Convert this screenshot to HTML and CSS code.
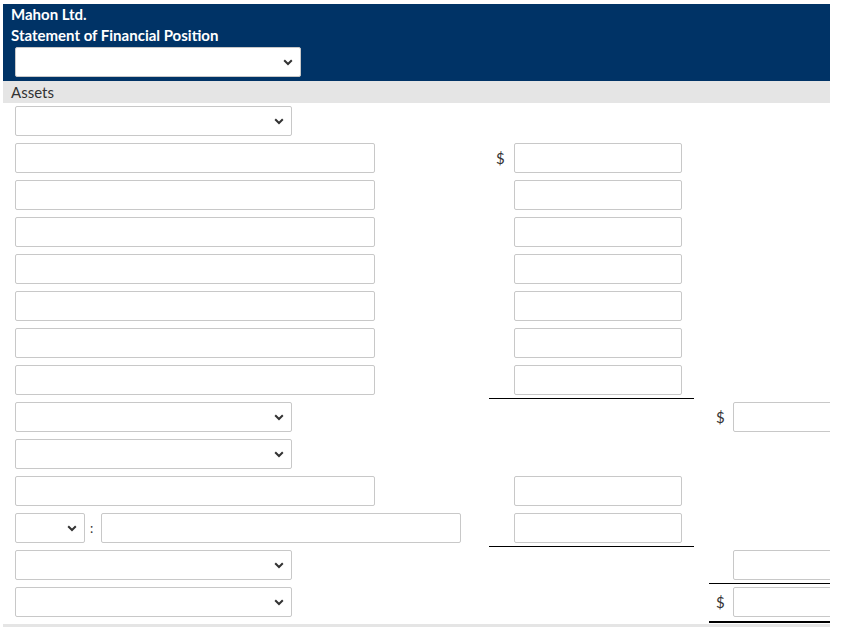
FILE: index.html
```html
<!DOCTYPE html>
<html>
<head>
<meta charset="utf-8">
<link rel="stylesheet" href="styles.css">
</head>
<body>
<div class="sheet">
  <div class="head">
    <div class="title">Mahon Ltd.</div>
    <div class="title">Statement of Financial Position</div>
    <div class="sel sel-head"><svg class="chev" width="10" height="7" viewBox="0 0 10 7"><path d="M1.2 1.3 L5 5 L8.8 1.3" fill="none" stroke="#333" stroke-width="2"/></svg></div>
  </div>
  <div class="section">Assets</div>
  <div class="rows">
    <div class="row">
      <div class="c1"><div class="sel sel-w"><svg class="chev" width="10" height="7" viewBox="0 0 10 7"><path d="M1.2 1.3 L5 5 L8.8 1.3" fill="none" stroke="#333" stroke-width="2"/></svg></div></div>
      <div class="c2"></div><div class="gap"></div><div class="c3"></div>
    </div>
    <div class="row">
      <div class="c1"><div class="inp inp-w"></div></div>
      <div class="c2"><span class="cur">$</span><div class="inp inp-n"></div></div><div class="gap"></div><div class="c3"></div>
    </div>
    <div class="row">
      <div class="c1"><div class="inp inp-w"></div></div>
      <div class="c2"><span class="cur"></span><div class="inp inp-n"></div></div><div class="gap"></div><div class="c3"></div>
    </div>
    <div class="row">
      <div class="c1"><div class="inp inp-w"></div></div>
      <div class="c2"><span class="cur"></span><div class="inp inp-n"></div></div><div class="gap"></div><div class="c3"></div>
    </div>
    <div class="row">
      <div class="c1"><div class="inp inp-w"></div></div>
      <div class="c2"><span class="cur"></span><div class="inp inp-n"></div></div><div class="gap"></div><div class="c3"></div>
    </div>
    <div class="row">
      <div class="c1"><div class="inp inp-w"></div></div>
      <div class="c2"><span class="cur"></span><div class="inp inp-n"></div></div><div class="gap"></div><div class="c3"></div>
    </div>
    <div class="row">
      <div class="c1"><div class="inp inp-w"></div></div>
      <div class="c2"><span class="cur"></span><div class="inp inp-n"></div></div><div class="gap"></div><div class="c3"></div>
    </div>
    <div class="row">
      <div class="c1"><div class="inp inp-w"></div></div>
      <div class="c2 rule"><span class="cur"></span><div class="inp inp-n"></div></div><div class="gap"></div><div class="c3"></div>
    </div>
    <div class="row">
      <div class="c1"><div class="sel sel-w"><svg class="chev" width="10" height="7" viewBox="0 0 10 7"><path d="M1.2 1.3 L5 5 L8.8 1.3" fill="none" stroke="#333" stroke-width="2"/></svg></div></div>
      <div class="c2"></div><div class="gap"></div>
      <div class="c3"><span class="cur cur3">$</span><div class="inp inp-n"></div></div>
    </div>
    <div class="row">
      <div class="c1"><div class="sel sel-w"><svg class="chev" width="10" height="7" viewBox="0 0 10 7"><path d="M1.2 1.3 L5 5 L8.8 1.3" fill="none" stroke="#333" stroke-width="2"/></svg></div></div>
      <div class="c2"></div><div class="gap"></div><div class="c3"></div>
    </div>
    <div class="row">
      <div class="c1"><div class="inp inp-w"></div></div>
      <div class="c2"><span class="cur"></span><div class="inp inp-n"></div></div><div class="gap"></div><div class="c3"></div>
    </div>
    <div class="row">
      <div class="c1">
        <div class="sel sel-s"><svg class="chev" width="10" height="7" viewBox="0 0 10 7"><path d="M1.2 1.3 L5 5 L8.8 1.3" fill="none" stroke="#333" stroke-width="2"/></svg></div>
        <span class="colon">:</span>
        <div class="inp inp-w"></div>
      </div>
      <div class="c2 rule"><span class="cur"></span><div class="inp inp-n"></div></div><div class="gap"></div><div class="c3"></div>
    </div>
    <div class="row">
      <div class="c1"><div class="sel sel-w"><svg class="chev" width="10" height="7" viewBox="0 0 10 7"><path d="M1.2 1.3 L5 5 L8.8 1.3" fill="none" stroke="#333" stroke-width="2"/></svg></div></div>
      <div class="c2"></div><div class="gap"></div>
      <div class="c3 rule"><span class="cur cur3"></span><div class="inp inp-n"></div></div>
    </div>
    <div class="row row-last">
      <div class="c1"><div class="sel sel-w"><svg class="chev" width="10" height="7" viewBox="0 0 10 7"><path d="M1.2 1.3 L5 5 L8.8 1.3" fill="none" stroke="#333" stroke-width="2"/></svg></div></div>
      <div class="c2"></div><div class="gap"></div>
      <div class="c3 rule2"><span class="cur cur3">$</span><div class="inp inp-n"></div></div>
    </div>
  </div>
  <div class="foot"></div>
</div>
</body>
</html>
```

FILE: styles.css
```css
html, body {
  margin: 0;
  padding: 0;
  background: #fff;
}
body {
  font-family: Lato, "Liberation Sans", sans-serif;
  color: #333;
}
.sheet {
  margin: 4px 0 0 3px;
  width: 827px;
  overflow: hidden;
}
.head {
  background: #003366;
  padding: 0 8px 4px 8px;
}
.title {
  color: #fff;
  font-weight: 700;
  font-size: 15px;
  line-height: 21px;
}
.sel {
  box-sizing: border-box;
  height: 30px;
  border: 1px solid #c8c8c8;
  border-radius: 2px;
  background: #fff;
  display: flex;
  align-items: center;
  justify-content: flex-end;
  padding-right: 7px;
  flex: none;
}
.sel-head {
  width: 286px;
  height: 30px;
  margin: 1px 0 0 4px;
}
.sel-w { width: 277px; }
.sel-s { width: 70px; }
.chev { display: block; }
.section {
  background: #e5e5e5;
  height: 22px;
  line-height: 22px;
  padding-left: 8px;
  font-size: 15px;
  color: #333;
}
.row {
  display: grid;
  grid-template-columns: 486px 205px 15px 121px;
  height: 37px;
}
.row-last { height: 39px; }
.c1, .c2, .c3 {
  box-sizing: border-box;
  display: flex;
  align-items: flex-start;
  padding-top: 3px;
  min-width: 0;
}
.c1 { padding-left: 12px; }
.rule { border-bottom: 1px solid #000; }
.rule2 { border-bottom: 2px solid #000; }
.inp {
  box-sizing: border-box;
  height: 30px;
  border: 1px solid #c8c8c8;
  border-radius: 2px;
  background: #fff;
  flex: none;
}
.inp-w { width: 360px; }
.inp-n { width: 168px; }
.cur {
  width: 25px;
  flex: none;
  box-sizing: border-box;
  padding-left: 7px;
  font-size: 15px;
  line-height: 30px;
  color: #333;
}
.cur3 { width: 24px; }
.colon {
  width: 16px;
  flex: none;
  box-sizing: border-box;
  padding-left: 5px;
  font-size: 13px;
  line-height: 30px;
  color: #333;
}
.foot {
  background: #e5e5e5;
  height: 6px;
  margin-top: 1px;
}
```
